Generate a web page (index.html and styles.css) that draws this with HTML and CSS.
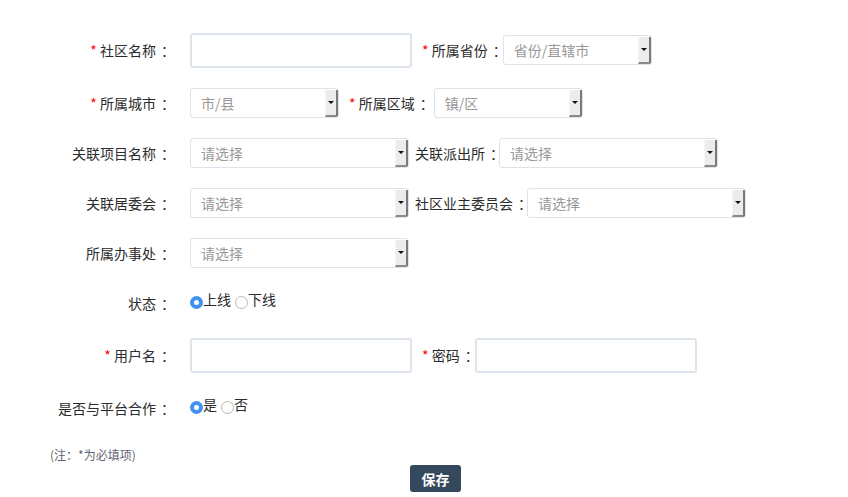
FILE: index.html
```html
<!DOCTYPE html>
<html lang="zh-CN">
<head>
    <meta charset="UTF-8">
    <title>社区信息</title>
    <link rel="stylesheet" href="styles.css">
</head>
<body>

<form class="form">
    <div class="row r1">
        <label class="lbl"><span class="req">*</span> 社区名称<span class="colon">：</span></label>
        <input type="text" class="txt">
        <label class="sub sub-req"><span class="req">*</span> 所属省份<span class="colon">：</span></label>
        <span class="sel w148"><select><option>省份/直辖市</option></select><i class="caret"></i></span>
    </div>
    <div class="row">
        <label class="lbl"><span class="req">*</span> 所属城市<span class="colon">：</span></label>
        <span class="sel w148"><select><option>市/县</option></select><i class="caret"></i></span>
        <label class="sub sub-req sub-wide"><span class="req">*</span> 所属区域<span class="colon">：</span></label>
        <span class="sel w148"><select><option>镇/区</option></select><i class="caret"></i></span>
    </div>
    <div class="row">
        <label class="lbl">关联项目名称<span class="colon">：</span></label>
        <span class="sel w218"><select><option>请选择</option></select><i class="caret"></i></span>
        <label class="sub">关联派出所<span class="colon">：</span></label>
        <span class="sel w218"><select><option>请选择</option></select><i class="caret"></i></span>
    </div>
    <div class="row">
        <label class="lbl">关联居委会<span class="colon">：</span></label>
        <span class="sel w218"><select><option>请选择</option></select><i class="caret"></i></span>
        <label class="sub">社区业主委员会<span class="colon">：</span></label>
        <span class="sel w218"><select><option>请选择</option></select><i class="caret"></i></span>
    </div>
    <div class="row">
        <label class="lbl">所属办事处<span class="colon">：</span></label>
        <span class="sel w218"><select><option>请选择</option></select><i class="caret"></i></span>
    </div>
    <div class="row">
        <label class="lbl">状态<span class="colon">：</span></label>
        <span class="radios">
            <input type="radio" name="status" checked>上线
            <input type="radio" name="status">下线
        </span>
    </div>
    <div class="row r7">
        <label class="lbl"><span class="req">*</span> 用户名<span class="colon">：</span></label>
        <input type="text" class="txt">
        <label class="sub sub-req"><span class="req">*</span> 密码<span class="colon">：</span></label>
        <input type="password" class="txt">
    </div>
    <div class="row r8">
        <label class="lbl">是否与平台合作<span class="colon">：</span></label>
        <span class="radios">
            <input type="radio" name="coop" checked>是
            <input type="radio" name="coop">否
        </span>
    </div>

    <p class="note">(注：*为必填项)</p>
    <button type="button" class="save">保存</button>
</form>

</body>
</html>
```

FILE: styles.css
```css
body {
    margin: 0;
    font-family: "Noto Sans CJK SC", "Liberation Sans", sans-serif;
    font-size: 14px;
    color: #2b2b2b;
    background: #fff;
}

/* SC colon sits on the left of its box; push it to the middle */
.colon {
    margin-left: 5px;
    letter-spacing: -5px;
}

.form {
    padding-top: 22px;
}

.row {
    display: flex;
    align-items: center;
    height: 50px;
}

.r1 { height: 56px; }
.r7 { height: 54px; }
.r8 { height: 52px; }

.lbl {
    width: 170px;
    margin-right: 20px;
    text-align: right;
    white-space: nowrap;
    flex-shrink: 0;
}

.req {
    color: #f00;
}

.sub {
    margin-left: 6px;
    margin-right: 0;
    white-space: nowrap;
}

.sub-req {
    margin-left: 10px;
    margin-right: 1px;
}

.sub-wide {
    margin-right: 5px;
}

.txt {
    width: 222px;
    height: 35px;
    box-sizing: border-box;
    border: 2px solid #dde4ec;
    border-radius: 3px;
    padding: 0 8px;
    font: inherit;
    outline: none;
}

/* fake select: old-style grey drop button on the right */
.sel {
    display: inline-flex;
    height: 30px;
    box-sizing: border-box;
    border: 1px solid #dce3ea;
    border-radius: 3px;
    background: #fff;
    overflow: hidden;
}

.w148 { width: 149px; }
.w218 { width: 219px; }

.sel select {
    flex: 1;
    min-width: 0;
    -webkit-appearance: none;
    appearance: none;
    border: none;
    background: transparent;
    padding: 0 0 0 10px;
    font: inherit;
    color: #999;
    outline: none;
}

.caret {
    width: 13px;
    margin: 1px 0 0;
    box-sizing: border-box;
    background: #ececec;
    border-left: 1px solid #f6f6f6;
    border-right: 2px solid #7a7a7a;
    border-bottom: 2px solid #8a8a8a;
    display: flex;
    align-items: center;
    justify-content: center;
}

.caret::before {
    content: "";
    border-left: 3px solid transparent;
    border-right: 3px solid transparent;
    border-top: 3px solid #111;
}

.radios {
    display: inline-flex;
    align-items: center;
    margin-bottom: 8px;
    line-height: 1;
}

.radios input {
    -webkit-appearance: none;
    appearance: none;
    width: 13px;
    height: 13px;
    margin: 6px 0 0 4px;
    border: 1px solid #b8b8b8;
    border-radius: 50%;
    background: #fff;
    box-sizing: border-box;
}

.radios input:first-child {
    margin-left: 0;
}

.radios input:checked {
    border: 4px solid #3f93ee;
    background: #fff;
}

.note {
    margin: 11px 0 0 50px;
    height: 20px;
    line-height: 20px;
    font-size: 12px;
    color: #5f6470;
}

.save {
    display: block;
    margin-left: 410px;
    width: 51px;
    height: 27px;
    border: none;
    border-radius: 3px;
    background: #34495e;
    color: #fff;
    font: inherit;
    font-weight: bold;
    padding: 0;
}
```
